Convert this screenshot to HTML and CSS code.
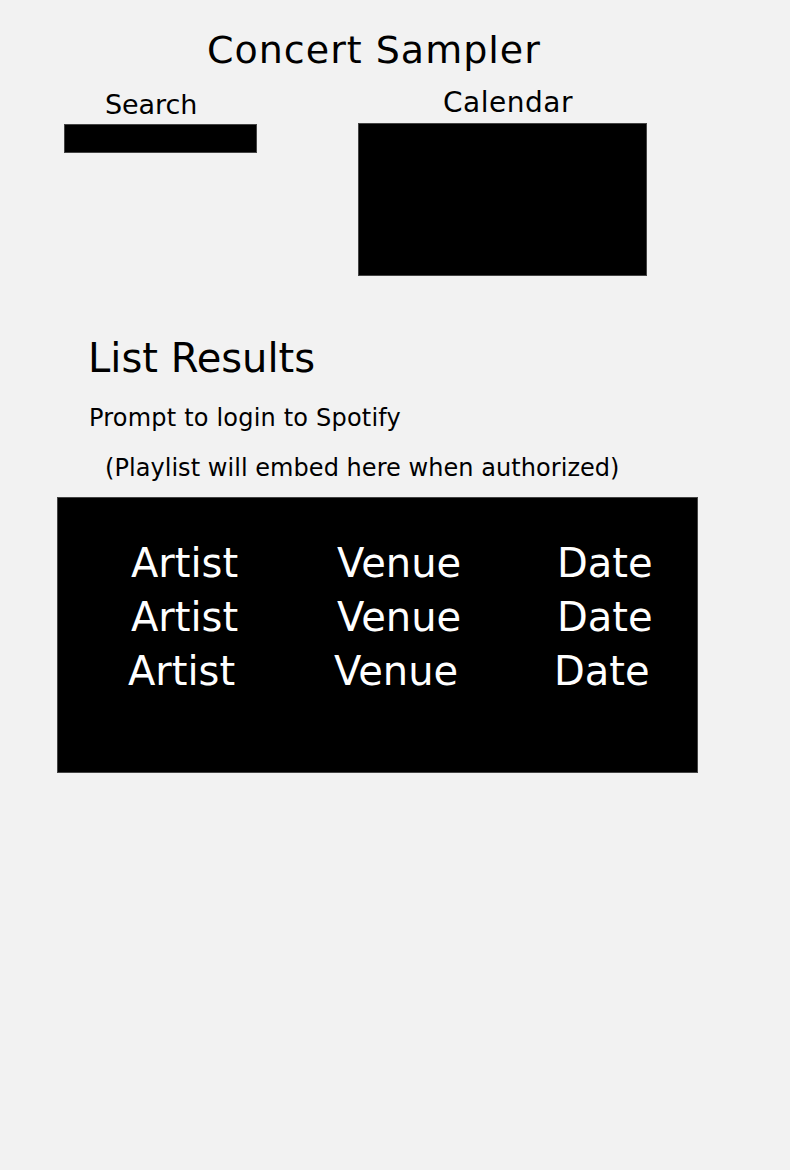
FILE: index.html
```html
<!DOCTYPE html>
<html lang="en">
<head>
<meta charset="utf-8">
<title>Concert Sampler</title>
<link rel="stylesheet" href="styles.css">
</head>
<body>
<main class="page">
  <h1 class="title">Concert Sampler</h1>

  <section class="top">
    <div class="search">
      <div class="search__label">Search</div>
      <div class="search__bar"></div>
    </div>
    <div class="calendar">
      <div class="calendar__label">Calendar</div>
      <div class="calendar__box"></div>
    </div>
  </section>

  <section class="results">
    <h2 class="results__title">List Results</h2>
    <p class="results__prompt">Prompt to login to Spotify</p>
    <p class="results__playlist">(Playlist will embed here when authorized)</p>
    <div class="table">
      <div class="row"><span>Artist</span><span>Venue</span><span>Date</span></div>
      <div class="row"><span>Artist</span><span>Venue</span><span>Date</span></div>
      <div class="row row--shift"><span>Artist</span><span>Venue</span><span>Date</span></div>
    </div>
  </section>
</main>
</body>
</html>
```

FILE: styles.css
```css
* {
  box-sizing: border-box;
}

html, body {
  margin: 0;
  padding: 0;
}

body {
  background: #f2f2f2;
  color: #000;
  font-family: "DejaVu Sans", Verdana, sans-serif;
  min-height: 1170px;
}

.page {
  display: flex;
  flex-direction: column;
}

.title {
  margin: 0;
  padding: 31px 0 0 207px;
  font-size: 38px;
  line-height: 38px;
  font-weight: normal;
  letter-spacing: 1px;
}

.top {
  display: flex;
  align-items: flex-start;
  margin-top: 19px;
}

.search {
  margin-left: 64px;
  margin-top: 3px;
  display: flex;
  flex-direction: column;
}

.search__label {
  padding-left: 41px;
  font-size: 27px;
  line-height: 27px;
  letter-spacing: -0.1px;
}

.search__bar {
  margin-top: 6px;
  width: 193px;
  height: 29px;
  background: #000;
  border: 1px solid #444;
}

.calendar {
  margin-left: 101px;
  margin-top: 1px;
  display: flex;
  flex-direction: column;
}

.calendar__label {
  padding-left: 85px;
  font-size: 28px;
  line-height: 28px;
  letter-spacing: 0.5px;
}

.calendar__box {
  margin-top: 6px;
  width: 289px;
  height: 153px;
  background: #000;
  border: 1px solid #444;
}

.results {
  display: flex;
  flex-direction: column;
  margin-top: 62px;
}

.results__title {
  margin: 0;
  padding-left: 88px;
  font-size: 40px;
  line-height: 40px;
  font-weight: normal;
}

.results__prompt {
  margin: 28px 0 0;
  padding-left: 89px;
  font-size: 24px;
  line-height: 24px;
  letter-spacing: 0.2px;
}

.results__playlist {
  margin: 26px 0 0;
  padding-left: 105px;
  font-size: 24px;
  line-height: 24px;
  letter-spacing: 0.05px;
}

.table {
  margin: 17px 0 0 57px;
  width: 641px;
  height: 276px;
  background: #000;
  border: 1px solid #444;
  padding: 38px 0 0 73px;
  color: #fff;
}

.row {
  display: grid;
  grid-template-columns: 206px 220px auto;
  font-size: 40px;
  line-height: 54px;
}

.row--shift {
  margin-left: -3px;
}
```
